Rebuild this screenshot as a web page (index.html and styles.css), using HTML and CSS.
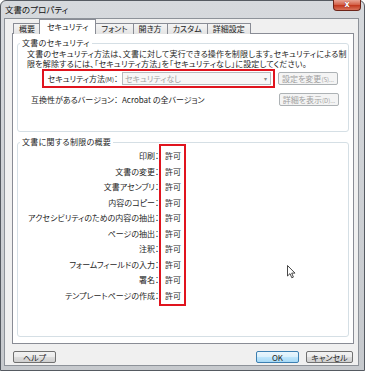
FILE: index.html
```html
<!DOCTYPE html>
<html lang="ja">

<head>
    <meta charset="UTF-8" />
    <title>文書のプロパティ</title>
    <link rel="stylesheet" href="styles.css">
</head>

<body>
    <div class="window">
        <!-- タイトルバー -->
        <div class="titlebar">
            <span class="title">文書のプロパティ</span>
            <span class="close">x</span>
        </div>

        <div class="client">
            <!-- タブ -->
            <ul class="tabs">
                <li>概要</li>
                <li class="active">セキュリティ</li>
                <li>フォント</li>
                <li>開き方</li>
                <li>カスタム</li>
                <li>詳細設定</li>
            </ul>

            <div class="panel">
                <fieldset class="group group-security">
                    <legend>文書のセキュリティ</legend>
                    <p class="desc">文書のセキュリティ方法は、文書に対して実行できる操作を制限します。セキュリティによる制<br>限を解除するには、「セキュリティ方法」を「セキュリティなし」に設定してください。</p>

                    <div class="row">
                        <div class="mark mark-method">
                            <span class="label">セキュリティ方法<small>(M)</small>：</span>
                            <div class="select">
                                <span>セキュリティなし</span>
                                <span class="arrow">▾</span>
                            </div>
                        </div>
                        <button class="btn" disabled>設定を変更<small>(S)...</small></button>
                    </div>

                    <div class="row row-compat">
                        <span class="label">互換性があるバージョン：</span>
                        <span class="value">Acrobat の全バージョン</span>
                        <button class="btn" disabled>詳細を表示<small>(D)...</small></button>
                    </div>
                </fieldset>

                <fieldset class="group group-limits">
                    <legend>文書に関する制限の概要</legend>
                    <div class="limits">
                        <ul class="names">
                            <li>印刷：</li>
                            <li>文書の変更：</li>
                            <li>文書アセンブリ：</li>
                            <li>内容のコピー：</li>
                            <li>アクセシビリティのための内容の抽出：</li>
                            <li>ページの抽出：</li>
                            <li>注釈：</li>
                            <li>フォームフィールドの入力：</li>
                            <li>署名：</li>
                            <li>テンプレートページの作成：</li>
                        </ul>
                        <ul class="mark values">
                            <li>許可</li>
                            <li>許可</li>
                            <li>許可</li>
                            <li>許可</li>
                            <li>許可</li>
                            <li>許可</li>
                            <li>許可</li>
                            <li>許可</li>
                            <li>許可</li>
                            <li>許可</li>
                        </ul>
                    </div>
                </fieldset>
            </div>

            <!-- 下のボタン -->
            <div class="footer">
                <button class="btn btn-help">ヘルプ</button>
                <button class="btn btn-ok">OK</button>
                <button class="btn">キャンセル</button>
            </div>
        </div>

        <!-- マウスカーソル -->
        <svg class="cursor" width="9" height="14" viewBox="0 0 9 14">
            <path d="M0.5 0.5 L0.5 11 L3 8.6 L4.8 12.8 L6.4 12.1 L4.7 8.1 L8 8.1 Z" fill="#fff" stroke="#333" stroke-width="0.9" stroke-linejoin="round" />
        </svg>
        <span class="grip"></span>
    </div>
</body>

</html>
```

FILE: styles.css
```css
* {
    margin: 0;
    padding: 0;
    box-sizing: border-box;
}

ul {
    list-style: none;
}

body {
    font-family: "Noto Sans CJK JP", "Noto Sans", sans-serif;
    font-size: 8px;
    font-feature-settings: "palt";
    color: #1e1e1e;
    background: #fff;
}

.window {
    position: relative;
    width: 365px;
    height: 371px;
    border: 1px solid #555a61;
    border-radius: 6px 6px 0 0;
    background: linear-gradient(#d6d9dd, #c6c9cd);
    display: flex;
    flex-direction: column;
}

.titlebar {
    height: 17px;
    display: flex;
    justify-content: space-between;
    align-items: flex-start;
    padding-left: 4px;
}

.titlebar .title {
    font-size: 8.5px;
    line-height: 17px;
    color: #111;
}

.titlebar .close {
    width: 28px;
    height: 11px;
    margin: -1px 3px 0 0;
    border: 1px solid #6d2418;
    border-top: none;
    border-radius: 0 0 4px 4px;
    background: linear-gradient(#e8a595, #d5634b 45%, #c23a20 55%, #d9725a);
    color: #fff;
    font: bold 8px "DejaVu Sans", sans-serif;
    line-height: 9px;
    text-align: center;
    text-shadow: 0 0 1px #600;
}

.client {
    flex: 1;
    margin: 0 5px 4px 3px;
    border: 1px solid #8d9299;
    background: #f0f0f0;
    padding: 0 4px 2px 7px;
    display: flex;
    flex-direction: column;
}

/* タブ */
.tabs {
    display: flex;
    align-items: flex-end;
    height: 15px;
    padding-left: 1px;
    position: relative;
    z-index: 1;
}

.tabs li {
    height: 11px;
    line-height: 10px;
    padding: 0 5px;
    border: 1px solid #898c95;
    border-bottom: none;
    margin-right: -1px;
    background: linear-gradient(#f4f4f4, #e4e4e4);
    color: #222;
}

.tabs li.active {
    height: 15px;
    line-height: 13px;
    padding: 0 7px;
    margin: 0 -1px 0 -1px;
    background: #fff;
    position: relative;
    z-index: 2;
}

.panel {
    flex: 1;
    margin-top: -1px;
    border: 1px solid #898c95;
    background: #fff;
    padding: 4px 4px 0 4px;
}

/* グループ */
.group {
    min-width: 0;
    border: 1px solid #d5dfe5;
    border-radius: 3px;
    padding: 0 9px;
}

.group legend {
    margin-left: -7px;
    padding: 0 2px;
    line-height: 10px;
    letter-spacing: 0.3px;
}

.group-security {
    padding-top: 1px;
    padding-bottom: 25px;
}

.desc {
    line-height: 10px;
    white-space: nowrap;
    letter-spacing: 0.2px;
}

.row {
    display: flex;
    align-items: center;
}

.mark {
    border: 2px solid #e0141e;
}

.mark-method {
    display: flex;
    align-items: center;
    height: 19px;
    margin-left: 15px;
    padding-right: 2px;
}

.label {
    text-align: right;
    white-space: nowrap;
}

.label small,
.btn small {
    font-size: 6px;
}

.mark-method .label {
    width: 74px;
    margin-right: 4px;
}

.select {
    width: 149px;
    height: 13px;
    border: 1px solid #b7babe;
    background: #f7f7f7;
    color: #a3a3a3;
    display: flex;
    justify-content: space-between;
    align-items: center;
    padding: 0 3px 0 2px;
}

.select .arrow {
    font: 6px "DejaVu Sans", sans-serif;
    color: #888;
}

.btn {
    height: 13px;
    border: 1px solid #707070;
    border-radius: 2px;
    background: linear-gradient(#f2f2f2, #ebebeb 48%, #dddddd 52%, #cfcfcf);
    font: 8px "Noto Sans CJK JP", sans-serif;
    font-feature-settings: "palt";
    color: #1e1e1e;
    line-height: 11px;
}

.btn:disabled {
    border-color: #adb2b5;
    background: #f4f4f4;
    color: #a0a0a0;
}

.row .btn {
    width: 60px;
    margin-left: 3px;
}

.row-compat {
    margin-top: 5px;
}

.row-compat .label {
    width: 91px;
    margin-right: 4px;
}

.row-compat .value {
    flex: 1;
}

.group-limits {
    margin-top: 5px;
    padding-bottom: 30px;
}

.limits {
    display: flex;
    align-items: flex-start;
    margin-top: -3px;
}

.limits li {
    line-height: 15.5px;
    white-space: nowrap;
}

.names {
    width: 132px;
    text-align: right;
    padding-top: 4px;
}

.values {
    padding: 2px 3px 1px 4px;
}

/* 下のボタン */
.footer {
    display: flex;
    gap: 7px;
    padding-top: 7px;
    padding-left: 1px;
    padding-right: 1px;
}

.footer .btn {
    width: 47px;
    height: 12px;
}

.footer .btn-help {
    width: 43px;
    margin-right: auto;
}

.footer .btn-ok {
    width: 43px;
    border-color: #3c7fb1;
    background: linear-gradient(#eaf6fd, #d9f0fc 48%, #bee6fd 52%, #a7d9f5);
}

.cursor {
    position: absolute;
    left: 286px;
    top: 264px;
}

.grip {
    position: absolute;
    right: 6px;
    bottom: 5px;
    width: 5px;
    height: 5px;
    background: radial-gradient(circle, #999 35%, transparent 40%) 0 0 / 2px 2px;
    clip-path: polygon(100% 0, 100% 100%, 0 100%);
}
```
